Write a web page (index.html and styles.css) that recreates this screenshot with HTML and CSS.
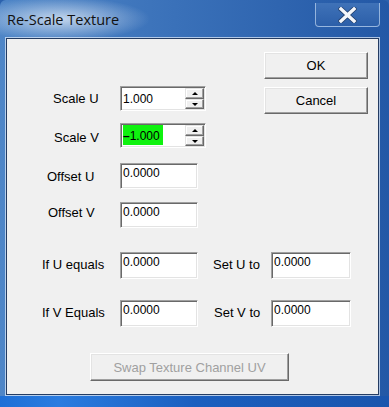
FILE: index.html
```html
<!DOCTYPE html>
<html lang="en">
<head>
    <meta charset="UTF-8">
    <title>Re-Scale Texture</title>
    <link rel="stylesheet" href="styles.css">
</head>
<body>

    <div class="window">
        <div class="titlebar">
            <span class="title">Re-Scale Texture</span>
            <button class="close" type="button">
                <svg width="19" height="16" viewBox="0 0 19 16">
                    <path d="M3 2 L16 14 M16 2 L3 14" stroke="#23406e" stroke-width="5" stroke-linecap="square"/>
                    <path d="M3 2 L16 14 M16 2 L3 14" stroke="#f4f6fa" stroke-width="3.4" stroke-linecap="square"/>
                </svg>
            </button>
        </div>

        <div class="client">
            <div class="upper">
                <div class="fields">
                    <div class="row scale-u">
                        <label>Scale U</label>
                        <div class="field spin">
                            <span class="value">1.000</span>
                            <div class="spinner">
                                <span class="up"></span>
                                <span class="down"></span>
                            </div>
                        </div>
                    </div>
                    <div class="row scale-v">
                        <label>Scale V</label>
                        <div class="field spin">
                            <span class="value selected"><b class="minus">&ndash;</b>1.000</span>
                            <div class="spinner">
                                <span class="up"></span>
                                <span class="down"></span>
                            </div>
                        </div>
                    </div>
                    <div class="row offset-u">
                        <label>Offset U</label>
                        <div class="field short"><span class="value">0.0000</span></div>
                    </div>
                    <div class="row offset-v">
                        <label>Offset V</label>
                        <div class="field short"><span class="value">0.0000</span></div>
                    </div>
                </div>
                <div class="buttons">
                    <button type="button" class="btn">OK</button>
                    <button type="button" class="btn">Cancel</button>
                </div>
            </div>

            <div class="lower">
                <div class="row pair first">
                    <label>If U equals</label>
                    <div class="field short"><span class="value">0.0000</span></div>
                    <label class="set">Set U to</label>
                    <div class="field wide"><span class="value">0.0000</span></div>
                </div>
                <div class="row pair second">
                    <label>If V Equals</label>
                    <div class="field short"><span class="value">0.0000</span></div>
                    <label class="set">Set V to</label>
                    <div class="field wide"><span class="value">0.0000</span></div>
                </div>
            </div>

            <button type="button" class="btn swap" disabled>Swap Texture Channel UV</button>
        </div>

        <div class="bottom-frame"></div>
    </div>

</body>
</html>
```

FILE: styles.css
```css
body {
    margin: 0;
    background: #2c62ad;
    font-family: "Liberation Sans", Arial, sans-serif;
    font-size: 13px;
    color: #000;
}

.window {
    width: 389px;
    height: 407px;
    display: flex;
    flex-direction: column;
    background: linear-gradient(90deg, #4f86c7 0%, #3a71b9 45%, #2358a6 100%);
    border-radius: 6px 6px 0 0;
    overflow: hidden;
}

.titlebar {
    height: 38px;
    display: flex;
    align-items: flex-start;
    padding-left: 7px;
    background: radial-gradient(ellipse 90px 22px at 60px 19px, rgba(235, 242, 250, 0.75), rgba(235, 242, 250, 0) 100%);
}

.title {
    font-family: "Open Sans", "Noto Sans", sans-serif;
    font-size: 14.5px;
    margin-top: 10px;
    color: #111;
}

.close {
    margin-left: auto;
    margin-top: 3px;
    margin-right: 9px;
    width: 65px;
    height: 24px;
    padding: 0;
    border: 1px solid rgba(190, 212, 240, 0.7);
    border-top: none;
    border-radius: 0 0 4px 4px;
    background: linear-gradient(#3f72b8, #2c5fa9);
    display: flex;
    align-items: center;
    justify-content: center;
}

.client {
    margin-left: 6px;
    width: 373px;
    height: 357px;
    box-sizing: border-box;
    background: #f0f0f0;
    border: 1px solid #243c62;
    box-shadow: 0 0 0 1px rgba(230, 240, 252, 0.7);
}

.bottom-frame {
    flex: 1;
    margin-top: 1px;
    background: linear-gradient(90deg, #1e6fd6 0%, #2a7ce0 15%, #1b5fbf 50%, #1a55ad 100%);
}

.upper {
    display: flex;
    padding-top: 13px;
}

.fields {
    width: 257px;
    padding-top: 34px;
    display: flex;
    flex-direction: column;
}

.row {
    display: flex;
    align-items: center;
}

.row label {
    width: 113px;
    box-sizing: border-box;
    line-height: 15px;
}

.scale-u label { padding-left: 46px; }
.scale-v { margin-top: 12px; }
.scale-v label { padding-left: 47px; padding-top: 3px; }
.offset-u { margin-top: 15px; }
.offset-u label { padding-left: 40px; }
.offset-v { margin-top: 13px; }
.offset-v label { padding-left: 41px; padding-bottom: 5px; }

.buttons {
    display: flex;
    flex-direction: column;
    gap: 8px;
}

.btn {
    font-family: "Liberation Sans", Arial, sans-serif;
    font-size: 13px;
    color: #000;
    width: 104px;
    height: 27px;
    padding: 0;
    background: #f0f0f0;
    border: 1px solid;
    border-color: #fff #696969 #696969 #fff;
    box-shadow: inset -1px -1px 0 #a0a0a0, inset 1px 1px 0 #e3e3e3;
}

.field {
    height: 25px;
    box-sizing: border-box;
    background: #fff;
    border: 1px solid;
    border-color: #a0a0a0 #fff #fff #a0a0a0;
    box-shadow: inset 1px 1px 0 #696969, inset -1px -1px 0 #e3e3e3;
    display: flex;
    align-items: stretch;
    font-size: 12px;
    padding: 1px 1px 1px 2px;
}

.field.spin {
    width: 86px;
}

.field.short {
    width: 78px;
    height: 26px;
}

.field.wide {
    width: 80px;
    height: 26px;
}

.value {
    line-height: 14px;
    padding-top: 1px;
    padding-right: 2px;
}

.spin .value {
    padding-top: 4px;
}

.value.selected {
    background: #0ff20f;
    padding-left: 0;
    padding-right: 3px;
    margin-bottom: 1px;
}

.minus {
    font-weight: bold;
    font-size: 12px;
}

.spinner {
    margin-left: auto;
    width: 19px;
    display: flex;
    flex-direction: column;
}

.spinner span {
    flex: 1;
    position: relative;
    background: #f0f0f0;
    border: 1px solid;
    border-color: #e3e3e3 #696969 #696969 #e3e3e3;
    box-shadow: inset -1px -1px 0 #a0a0a0, inset 1px 1px 0 #fff;
}

.spinner span::after {
    content: "";
    position: absolute;
    left: 6px;
    top: 3px;
    border-left: 3px solid transparent;
    border-right: 3px solid transparent;
}

.spinner .up::after {
    border-bottom: 3px solid #000;
}

.spinner .down::after {
    border-top: 3px solid #000;
}

.lower {
    margin-top: 24px;
}

.pair {
    height: 27px;
}

.pair .field {
    height: 27px;
}

.pair label {
    padding-left: 35px;
    padding-bottom: 2px;
}

.pair label.set {
    width: 58px;
    margin-left: 15px;
    padding-left: 0;
}

.pair.second {
    margin-top: 21px;
}

.pair.second label.set {
    padding-left: 1px;
}

.swap {
    display: block;
    margin-top: 26px;
    margin-left: 83px;
    width: 199px;
    height: 28px;
    color: #a0a0a0;
}
```
